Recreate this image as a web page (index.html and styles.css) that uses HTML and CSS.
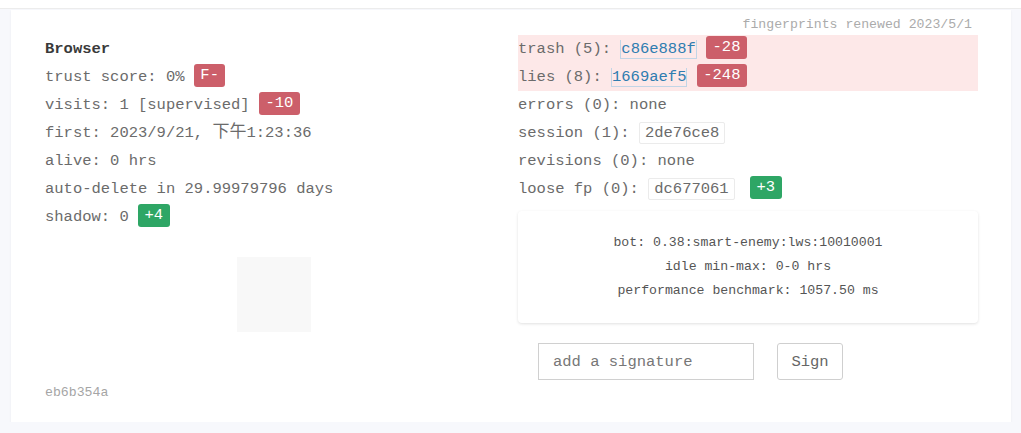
FILE: index.html
```html
<!DOCTYPE html>
<html>
<head>
<meta charset="utf-8">
<link rel="stylesheet" href="styles.css">
</head>
<body>
<div class="topstrip"></div>
<div class="card">
  <div class="renewed">fingerprints renewed 2023/5/1</div>
  <div class="cols">
    <div class="col left">
      <div class="row title">Browser</div>
      <div class="row">trust score: 0% <span class="badge red">F-</span></div>
      <div class="row">visits: 1 [supervised] <span class="badge red">-10</span></div>
      <div class="row">first: 2023/9/21, <span class="cjk">下午</span>1:23:36</div>
      <div class="row">alive: 0 hrs</div>
      <div class="row">auto-delete in 29.99979796 days</div>
      <div class="row">shadow: 0 <span class="badge green">+4</span></div>
      <div class="imgwrap"><div class="imgbox"></div></div>
      <div class="hashfoot">eb6b354a</div>
    </div>
    <div class="col right">
      <div class="bad">
        <div class="row">trash (5): <span class="hash">c86e888f</span> <span class="badge red">-28</span></div>
        <div class="row">lies (8): <span class="hash">1669aef5</span> <span class="badge red">-248</span></div>
      </div>
      <div class="row">errors (0): none</div>
      <div class="row">session (1): <span class="box">2de76ce8</span></div>
      <div class="row">revisions (0): none</div>
      <div class="row">loose fp (0): <span class="box">dc677061</span> <span class="badge green gap">+3</span></div>
      <div class="botbox">
        <div>bot: 0.38:smart-enemy:lws:10010001</div>
        <div>idle min-max: 0-0 hrs</div>
        <div>performance benchmark: 1057.50 ms</div>
      </div>
      <div class="sigform">
        <input class="siginput" type="text" placeholder="add a signature">
        <button class="sigbtn">Sign</button>
      </div>
    </div>
  </div>
</div>
</body>
</html>
```
FILE: styles.css
```css
html, body {
  margin: 0;
  padding: 0;
  background: #f7f8fc;
}
body {
  font-family: "Liberation Mono", "Noto Sans CJK SC", monospace;
  font-size: 15.5px;
  color: #6b6b6b;
}
.topstrip {
  height: 8px;
  background: #fff;
  border-bottom: 1px solid #ececec;
}
.card {
  position: relative;
  box-sizing: border-box;
  width: 1000px;
  height: 412px;
  margin: 1px 0 0 11px;
  background: #fff;
  box-shadow: 0 1px 2px rgba(0,0,0,0.06);
  padding: 25px 33px 0 34px;
}
.renewed {
  position: absolute;
  top: 6px;
  right: 39px;
  font-size: 13.2px;
  color: #ababab;
  line-height: 18px;
}
.cols {
  display: grid;
  grid-template-columns: 458px 460px;
  column-gap: 15px;
}
.row {
  height: 28px;
  line-height: 28px;
  white-space: nowrap;
}
.title {
  font-weight: bold;
  color: #3a3a3a;
}
.cjk {
  font-family: "Noto Sans CJK SC", sans-serif;
  font-size: 17px;
  line-height: 1;
}
.badge {
  display: inline-block;
  height: 23px;
  line-height: 23px;
  padding: 0 6.5px;
  border-radius: 3px;
  color: #fff;
  vertical-align: middle;
  margin-top: -3px;
}
.red { background: #cc5f6a; }
.green { background: #2ea665; }
.gap { margin-left: 6px; }
.imgwrap {
  display: flex;
  justify-content: center;
  margin-top: 26px;
}
.imgbox {
  width: 74px;
  height: 75px;
  background: #f8f8f8;
}
.hashfoot {
  margin-top: 52px;
  font-size: 13.2px;
  color: #a5a5a5;
  line-height: 18px;
}
.bad {
  background: #fde8e8;
}
.hash {
  color: #2f7db0;
  border: 1px solid #c2d5e6;
  border-top: none;
  padding: 0;
}
.box {
  display: inline-block;
  line-height: 20px;
  padding: 0 5px;
  border: 1px solid #ebebeb;
  border-radius: 2px;
}
.botbox {
  margin-top: 8px;
  height: 112px;
  box-sizing: border-box;
  padding-top: 20px;
  background: #fff;
  border-radius: 4px;
  box-shadow: 0 1px 3px rgba(0,0,0,0.12);
  text-align: center;
  font-size: 13.2px;
  line-height: 24px;
  color: #555;
}
.sigform {
  display: flex;
  gap: 23px;
  margin: 20px 0 0 20px;
}
.siginput {
  box-sizing: border-box;
  width: 216px;
  height: 37px;
  border: 1px solid #d0d0d0;
  border-radius: 0;
  padding: 0 14px;
  font-family: "Liberation Mono", monospace;
  font-size: 15.5px;
  color: #555;
  outline: none;
}
.siginput::placeholder { color: #777; }
.sigbtn {
  box-sizing: border-box;
  width: 66px;
  height: 37px;
  background: #fff;
  border: 1px solid #cfcfcf;
  border-radius: 3px;
  font-family: "Liberation Mono", monospace;
  font-size: 15.5px;
  color: #666;
  padding: 0;
}
```
